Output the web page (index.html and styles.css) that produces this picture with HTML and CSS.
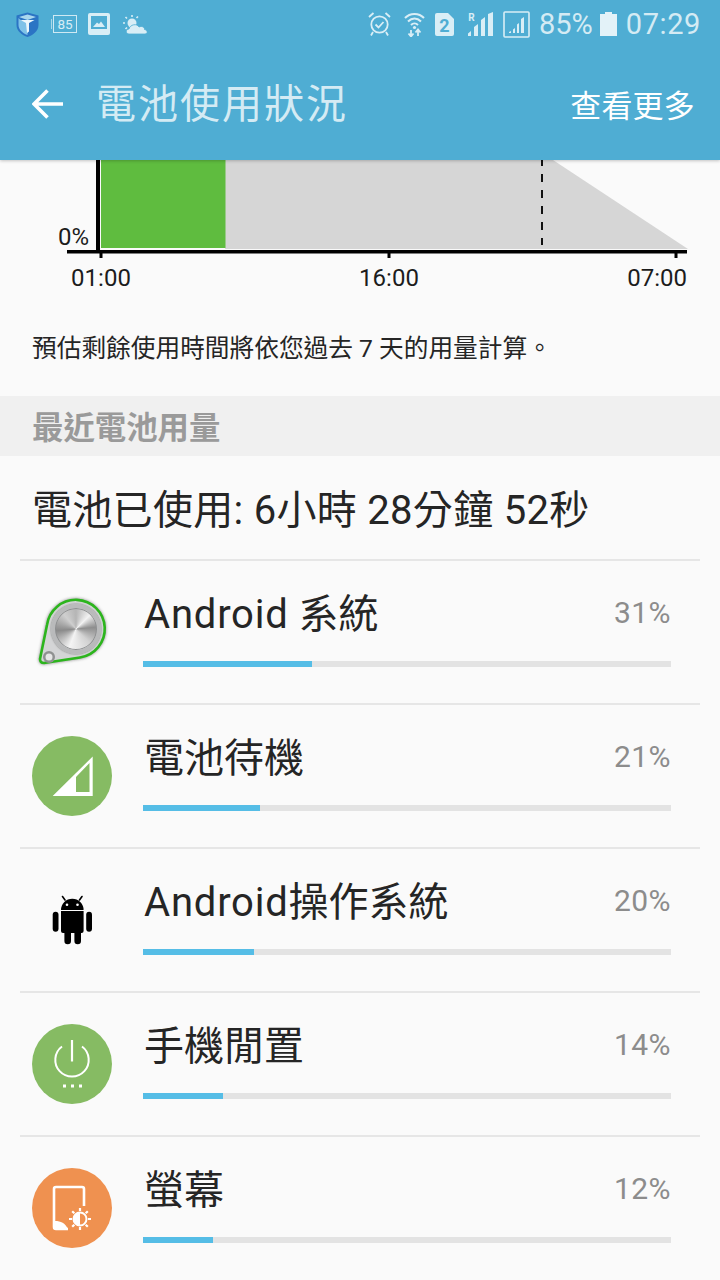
FILE: index.html
```html
<!DOCTYPE html>
<html lang="zh-Hant">
<head>
<meta charset="utf-8">
<title>電池使用狀況</title>
<link rel="stylesheet" href="styles.css">
</head>
<body>
<div class="page">
  <header class="top">
    <div class="status">
      <div class="status-left">
        <svg class="i-shield" viewBox="0 0 23 25"><path d="M11.5 0.5 L22.5 3.5 V13 C22.5 19 17 23 11.5 25 C6 23 0.5 19 0.5 13 V3.5 Z" fill="#2b74c4"/><path d="M11.5 2.5 L20 5 L11.5 8 L3 5 Z" fill="#a9d7ee"/><path d="M2.5 6 C5 9 8 9.5 11.5 9 V23 C6 21 2.5 17 2.5 13 Z" fill="#7ec2e8"/><path d="M4.5 8 H18.5 L13 11 V19.5 L11 21 L10 11 Z" fill="#eaf6fb"/></svg>
        <svg class="i-batt85" viewBox="0 0 26 18"><path d="M0.5 4 V14" stroke="#cfe9f3" stroke-width="1" opacity=".7"/><rect x="2.5" y="0.5" width="23" height="17" fill="none" stroke="#cfe9f3" stroke-width="1"/><text x="14" y="14" class="t85">85</text></svg>
        <svg class="i-pic" viewBox="0 0 22 22"><rect width="22" height="22" rx="2" fill="#d9eef6"/><rect x="3" y="3" width="16" height="13" fill="#4fadd3"/><path d="M5 14 L9 9.5 L11 11 L13 8.5 L17 14 Z" fill="#d9eef6"/></svg>
        <svg class="i-weather" viewBox="0 0 25 19"><circle cx="9" cy="8" r="4.5" fill="#d9eef6"/><path d="M9 0 V2 M2.5 2 L4 3.5 M0 8 H2 M2.5 14 L4 12.5 M15 1.5 L13.5 3" stroke="#d9eef6" stroke-width="1.6"/><path d="M6 19 C2.5 19 2.5 14 6 14 C7 9.5 14 8 16 12 C19 10.5 22 12.5 21.5 14.5 C25 15 25 19 22 19 Z" fill="#d9eef6" stroke="#4fadd3" stroke-width=".8"/></svg>
      </div>
      <div class="status-right">
        <svg class="i-alarm" viewBox="0 0 23 24"><circle cx="11.5" cy="12.5" r="8.2" fill="none" stroke="#d9eef6" stroke-width="1.8"/><path d="M7.5 12.5 L10.5 15.5 L15.5 10" fill="none" stroke="#d9eef6" stroke-width="1.8"/><path d="M1 5 L5.5 1 M22 5 L17.5 1 M5 20 L3 23.5 M18 20 L20 23.5" stroke="#d9eef6" stroke-width="1.8"/></svg>
        <svg class="i-wifi" viewBox="0 0 21 25"><path d="M1 6 C6 0.5 15 0.5 20 6 M4 9.5 C8 5.5 13 5.5 17 9.5 M7 13 C9 11 12 11 14 13" fill="none" stroke="#d9eef6" stroke-width="2"/><circle cx="10.5" cy="15.5" r="1.6" fill="#d9eef6"/><path d="M7 18 V24 M4.5 21.5 L7 24.5 L9.5 21.5 M14 24 V18 M11.5 20.5 L14 17.5 L16.5 20.5" fill="none" stroke="#d9eef6" stroke-width="1.8"/></svg>
        <svg class="i-sim" viewBox="0 0 19 23"><path d="M2 0 H13 L19 6 V21 A2 2 0 0 1 17 23 H2 A2 2 0 0 1 0 21 V2 A2 2 0 0 1 2 0 Z" fill="#d9eef6"/><text x="9.5" y="18.5" class="tsim">2</text></svg>
        <svg class="i-signal" viewBox="0 0 25 24"><text x="3.5" y="9" class="troam">R</text><path d="M0 24 V21.5 L3 19 V24 Z M6 24 V15 L10 12 V24 Z M13 24 V8 L17 5 V24 Z M20 24 V2 L25 0 V24 Z" fill="#d9eef6"/></svg>
        <svg class="i-signal2" viewBox="0 0 27 27"><rect x="1" y="1" width="25" height="25" rx="1" fill="none" stroke="#d9eef6" stroke-width="1.6"/><path d="M6 22 H8 V20 L6 21 Z M10 22 H12 V17 L10 18.5 Z M14 22 H16 V12 L14 13.5 Z M18 22 H21 V6 L18 8 Z" fill="#d9eef6"/></svg>
        <span class="pct">85%</span>
        <svg class="i-batt" viewBox="0 0 17 24"><path d="M5 0 H12 V2 H17 V24 H0 V2 H5 Z" fill="#e3f2f8"/></svg>
        <span class="clock">07:29</span>
      </div>
    </div>
    <div class="bar">
      <svg class="back" viewBox="0 0 32 30"><path d="M31 15 H3 M15.5 1.5 L2 15 L15.5 28.5" fill="none" stroke="#fff" stroke-width="3.6"/></svg>
      <h1 class="title">電池使用狀況</h1>
      <span class="more">查看更多</span>
    </div>
  </header>

  <section class="chart">
    <svg class="chart-svg" viewBox="0 0 720 140" width="720" height="140">
      <path d="M553 0 L688 89 H225 V0 Z" fill="#d6d6d6"/>
      <rect x="101" y="0" width="124.500" height="88" fill="#5fbc3f"/>
      <path d="M542 0 V85" stroke="#111" stroke-width="2" stroke-dasharray="8 8" stroke-dashoffset="2"/>
      <rect x="96" y="0" width="4" height="92" fill="#000"/>
      <rect x="67" y="90" width="620" height="3.500" fill="#000"/>
      <path d="M101 92 V98 M389 92 V98 M676 92 V98" stroke="#000" stroke-width="3"/>
      <text x="89" y="85" class="axis end">0%</text>
      <text x="101" y="126" class="axis mid">01:00</text>
      <text x="389" y="126" class="axis mid">16:00</text>
      <text x="687" y="126" class="axis end">07:00</text>
    </svg>
    <p class="note">預估剩餘使用時間將依您過去 7 天的用量計算。</p>
  </section>

  <h2 class="section">最近電池用量</h2>
  <div class="used">電池已使用: 6小時 28分鐘 52秒</div>

  <ul class="list">
    <li class="row">
      <div class="icon">
        <svg viewBox="0 0 80 80"><defs><filter id="gb" x="-20%" y="-20%" width="140%" height="140%"><feGaussianBlur stdDeviation="1.6"/></filter></defs>
          <path d="M8 67 L15 33 A29 29 0 1 1 48 65.500 L12 71 Q8 71 8 67 Z" fill="#777" stroke="#444" stroke-width="3" filter="url(#gb)" opacity=".55"/>
          <path d="M8 67 L15 33 A29 29 0 1 1 48 65.500 L12 71 Q8 71 8 67 Z" fill="#d4d5d6" stroke="#2cb51d" stroke-width="2.600" stroke-linejoin="round"/>
          <circle cx="17" cy="65" r="6" fill="#8f9190"/><circle cx="17" cy="65" r="3.500" fill="#e6e6e6"/>
        </svg>
        <span class="disc"></span>
      </div>
      <div class="body">
        <div class="head"><span class="name"><span class="lat">Android</span> 系統</span><span class="val">31%</span></div>
        <div class="track"><div class="fill" style="width:169px"></div></div>
      </div>
    </li>
    <li class="row">
      <div class="icon">
        <svg viewBox="0 0 80 80"><circle cx="40" cy="40" r="40" fill="#86bb63"/><path fill-rule="evenodd" d="M60.700 20.500 V60 H20.700 Z M57.500 27 L44 41 V56 H57.500 Z" fill="#fff"/></svg>
      </div>
      <div class="body">
        <div class="head"><span class="name">電池待機</span><span class="val">21%</span></div>
        <div class="track"><div class="fill" style="width:117px"></div></div>
      </div>
    </li>
    <li class="row">
      <div class="icon">
        <svg viewBox="0 0 80 80"><path d="M29 30 A11.300 11.300 0 0 1 51.600 30 Z" fill="#000"/><path d="M33 20 L30.500 16.500 M47.500 20 L50 16.500" stroke="#000" stroke-width="1.600" stroke-linecap="round"/><circle cx="35" cy="24.800" r="1.300" fill="#fff"/><circle cx="45.500" cy="24.800" r="1.300" fill="#fff"/><path d="M29 31 H51.600 V51 A2 2 0 0 1 49.600 53 H49 V61 A3.300 3.300 0 0 1 42.400 61 V53 H39 V61 A3.300 3.300 0 0 1 32.400 61 V53 H31 A2 2 0 0 1 29 51 Z" fill="#000"/><rect x="20.700" y="31.700" width="5.800" height="20" rx="2.900" fill="#000"/><rect x="54.200" y="31.700" width="5.800" height="20" rx="2.900" fill="#000"/></svg>
      </div>
      <div class="body">
        <div class="head"><span class="name"><span class="lat">Android</span>操作系統</span><span class="val">20%</span></div>
        <div class="track"><div class="fill" style="width:111px"></div></div>
      </div>
    </li>
    <li class="row">
      <div class="icon">
        <svg viewBox="0 0 80 80"><circle cx="40" cy="40" r="40" fill="#86bb63"/><path d="M30 22.500 A16.700 16.700 0 1 0 50 22.500" fill="none" stroke="#fff" stroke-width="2"/><path d="M40 16 V37.500" stroke="#fff" stroke-width="2.200"/><path d="M31 60.500 H34 V63.500 H31 Z M39 60.500 H42 V63.500 H39 Z M47 60.500 H50 V63.500 H47 Z" fill="#fff"/></svg>
      </div>
      <div class="body">
        <div class="head"><span class="name">手機閒置</span><span class="val">14%</span></div>
        <div class="track"><div class="fill" style="width:80px"></div></div>
      </div>
    </li>
    <li class="row">
      <div class="icon">
        <svg viewBox="0 0 80 80"><circle cx="40" cy="40" r="40" fill="#ef9150"/><path d="M52 38 V21 A2 2 0 0 0 50 19 H24 A2 2 0 0 0 22 21 V59 A2 2 0 0 0 24 61 H36" fill="none" stroke="#fff" stroke-width="2.600"/><path d="M23 53 C29 53 33 55 36 61 H23 Z" fill="#fff"/><circle cx="48" cy="51" r="6.500" fill="none" stroke="#fff" stroke-width="2"/><path d="M48 44.500 A6.500 6.500 0 0 0 48 57.500 Z" fill="#fff"/><path d="M48 40 V43 M48 59 V62 M37 51 H40 M56 51 H59 M40.200 43.200 L42.300 45.300 M53.700 56.700 L55.800 58.800 M40.200 58.800 L42.300 56.700 M53.700 45.300 L55.800 43.200" stroke="#fff" stroke-width="2.200"/></svg>
      </div>
      <div class="body">
        <div class="head"><span class="name">螢幕</span><span class="val">12%</span></div>
        <div class="track"><div class="fill" style="width:70px"></div></div>
      </div>
    </li>
  </ul>
</div>
</body>
</html>
```

FILE: styles.css
```css
* { box-sizing: border-box; }
html, body { margin: 0; padding: 0; }
body {
  width: 720px;
  height: 1280px;
  overflow: hidden;
  background: #fafafa;
  font-family: Roboto, "Noto Sans CJK TC", sans-serif;
  color: #252525;
}
.page { width: 720px; height: 1280px; overflow: hidden; display: flex; flex-direction: column; }

.top {
  position: relative;
  z-index: 2;
  height: 160px;
  flex: none;
  background: #4fadd3;
  box-shadow: 0 1px 3px rgba(0, 0, 0, .22);
}
.status { height: 48px; display: flex; justify-content: space-between; align-items: center; padding: 0 19px 0 16px; }
.status-left, .status-right { display: flex; align-items: center; }
.status svg { display: block; flex: none; }
.i-shield { width: 23px; height: 25px; }
.i-batt85 { width: 26px; height: 18px; margin-left: 12px; }
.i-pic { width: 22px; height: 22px; margin-left: 11px; }
.i-weather { width: 25px; height: 19px; margin-left: 13px; }
.i-alarm { width: 23px; height: 24px; }
.i-wifi { width: 21px; height: 25px; margin-left: 13px; }
.i-sim { width: 19px; height: 23px; margin-left: 10px; }
.i-signal { width: 25px; height: 24px; margin-left: 14px; }
.i-signal2 { width: 27px; height: 27px; margin-left: 10px; }
.i-batt { width: 17px; height: 24px; margin-left: 7px; }
.pct, .clock { font-family: Roboto, sans-serif; font-size: 29px; line-height: 48px; color: #d4ebf4; }
.pct { margin-left: 9px; }
.clock { margin-left: 9px; letter-spacing: .6px; }
.t85 { font: 13.5px Roboto, sans-serif; fill: #d9eef6; text-anchor: middle; }
.tsim { font: bold 18px Roboto, sans-serif; fill: #4fadd3; text-anchor: middle; }
.troam { font: bold 10px Roboto, sans-serif; fill: #d9eef6; text-anchor: middle; }

.bar { height: 112px; display: flex; align-items: center; padding: 0 25px 0 32px; }
.back { width: 32px; height: 30px; flex: none; }
.title {
  margin: 2px 0 0 32px;
  font-size: 40px;
  font-weight: 400;
  letter-spacing: 2px;
  color: #d4ebf4;
  flex: 1;
  line-height: 1.2;
}
.more { font-size: 31px; color: #fff; line-height: 1.2; margin-top: 5px; letter-spacing: .2px; }

.chart { height: 236px; flex: none; }
.chart-svg { display: block; }
.axis { font: 24px Roboto, sans-serif; fill: #1c1c1c; }
.mid { text-anchor: middle; }
.end { text-anchor: end; }
.note { margin: 31px 0 0 32px; font-size: 24.7px; line-height: 36px; color: #252525; }

.section {
  margin: 0;
  height: 60px;
  flex: none;
  padding-left: 32px;
  background: #f0f0f0;
  font-size: 31.4px;
  font-weight: 700;
  line-height: 66px;
  color: #9a9a9a;
}
.used { height: 103px; flex: none; padding-left: 32px; font-size: 40px; letter-spacing: .3px; line-height: 110px; color: #252525; }

.list { list-style: none; margin: 0 20px; padding: 0; }
.row { height: 144px; display: flex; border-top: 2px solid #e6e6e6; }
.icon { position: relative; width: 80px; height: 80px; margin: 31px 0 0 11.5px; flex: none; }
.icon svg { display: block; width: 80px; height: 80px; }
.disc {
  position: absolute;
  left: 19px;
  top: 12px;
  width: 50px;
  height: 50px;
  border-radius: 50%;
  border: 4px solid #b9babb;
  box-shadow: inset 0 0 0 1px #8d8f90, 0 0 2px #666;
  background: conic-gradient(#b5b5b5, #f2f2f2 45deg, #8e8e8e 85deg, #d2d2d2 135deg, #f4f4f4 200deg, #8a8a8a 265deg, #cfcfcf 320deg, #b5b5b5);
}
.body { margin-left: 31.5px; width: 528px; flex: none; }
.head { height: 100px; display: flex; justify-content: space-between; padding-top: 24px; }
.name { font-size: 40px; line-height: 60px; color: #252525; margin-left: 1px; }
.lat { letter-spacing: .8px; }
.val { font-size: 30px; letter-spacing: .4px; line-height: 56px; color: #8c8c8c; }
.track { height: 6px; background: #e3e3e3; }
.fill { height: 6px; background: #55bde6; }
```
